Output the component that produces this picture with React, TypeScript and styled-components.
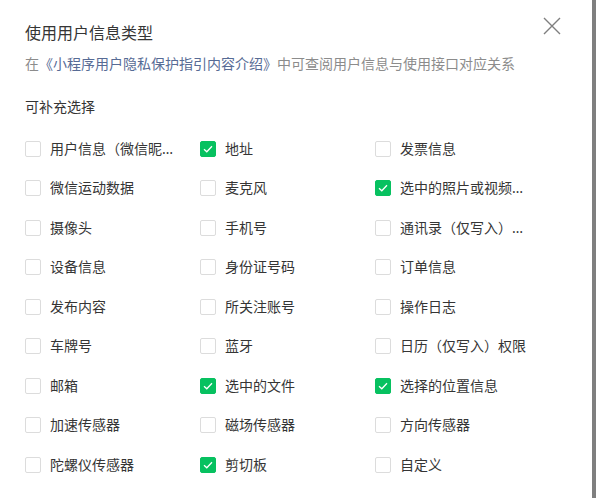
import React from 'react';
import styled, { createGlobalStyle } from 'styled-components';

const GlobalStyle = createGlobalStyle`
  html, body {
    margin: 0;
    padding: 0;
    background: #7f7f7f;
  }
  body {
    font-family: "Noto Sans CJK SC", "Noto Sans", "Liberation Sans", sans-serif;
  }
`;

const Page = styled.div`
  display: flex;
  width: 596px;
  height: 498px;
  overflow: hidden;
`;

const Dialog = styled.div`
  position: relative;
  width: 592px;
  height: 498px;
  box-sizing: border-box;
  background: #fff;
  padding: 20px 25px 0 25px;
`;

const Backdrop = styled.div`
  flex: 1;
  background: #7f7f7f;
`;

const Title = styled.h2`
  margin: 0;
  font-size: 16px;
  line-height: 24px;
  font-weight: 400;
  color: #353535;
`;

const CloseButton = styled.button`
  position: absolute;
  top: 16px;
  right: 30px;
  width: 20px;
  height: 20px;
  padding: 0;
  border: none;
  background: none;
  cursor: pointer;
  display: flex;
  align-items: center;
  justify-content: center;
`;

const Desc = styled.p`
  margin: 9px 0 0;
  font-size: 14px;
  line-height: 20px;
  color: #8c8c8c;
`;

const Link = styled.a`
  color: #576b95;
  text-decoration: none;
`;

const SectionLabel = styled.div`
  margin-top: 23px;
  font-size: 14px;
  line-height: 20px;
  color: #353535;
`;

const Grid = styled.div`
  margin-top: 13px;
  display: grid;
  grid-template-columns: repeat(3, 175px);
  grid-auto-rows: 39.5px;
`;

const Option = styled.label`
  display: flex;
  align-items: center;
  gap: 9px;
  cursor: pointer;
`;

const Box = styled.span<{ $checked: boolean }>`
  flex: none;
  width: 16px;
  height: 16px;
  box-sizing: border-box;
  border-radius: 2px;
  border: 1px solid ${(p) => (p.$checked ? '#07c160' : '#dcdcdc')};
  background: ${(p) => (p.$checked ? '#07c160' : '#fff')};
  display: flex;
  align-items: center;
  justify-content: center;
`;

// Latin font first so the ellipsis sits on the baseline like "..."
const OptionText = styled.span`
  max-width: 132px;
  font-family: "Noto Sans", "Noto Sans CJK SC", sans-serif;
  font-size: 14px;
  line-height: 20px;
  color: #353535;
  white-space: nowrap;
  overflow: hidden;
  text-overflow: ellipsis;
`;

const options: { label: string; checked?: boolean }[] = [
  { label: '用户信息（微信昵称、头像）' },
  { label: '地址', checked: true },
  { label: '发票信息' },
  { label: '微信运动数据' },
  { label: '麦克风' },
  { label: '选中的照片或视频信息', checked: true },
  { label: '摄像头' },
  { label: '手机号' },
  { label: '通讯录（仅写入）权限' },
  { label: '设备信息' },
  { label: '身份证号码' },
  { label: '订单信息' },
  { label: '发布内容' },
  { label: '所关注账号' },
  { label: '操作日志' },
  { label: '车牌号' },
  { label: '蓝牙' },
  { label: '日历（仅写入）权限' },
  { label: '邮箱' },
  { label: '选中的文件', checked: true },
  { label: '选择的位置信息', checked: true },
  { label: '加速传感器' },
  { label: '磁场传感器' },
  { label: '方向传感器' },
  { label: '陀螺仪传感器' },
  { label: '剪切板', checked: true },
  { label: '自定义' },
];

const Check = () => (
  <svg width="10" height="8" viewBox="0 0 10 8">
    <path d="M1 4.2 L3.8 6.8 L9 1.2" fill="none" stroke="#fff" strokeWidth="1.3" />
  </svg>
);

export default function App() {
  return (
    <Page>
      <GlobalStyle />
      <Dialog>
        <Title>使用用户信息类型</Title>
        <CloseButton aria-label="关闭">
          <svg width="18" height="18" viewBox="0 0 18 18">
            <path d="M1 1 L17 17 M17 1 L1 17" stroke="#7f7f7f" strokeWidth="1.4" />
          </svg>
        </CloseButton>
        <Desc>
          在<Link href="#">《小程序用户隐私保护指引内容介绍》</Link>中可查阅用户信息与使用接口对应关系
        </Desc>
        <SectionLabel>可补充选择</SectionLabel>
        <Grid>
          {options.map((o) => (
            <Option key={o.label}>
              <Box $checked={!!o.checked}>{o.checked && <Check />}</Box>
              <OptionText>{o.label}</OptionText>
            </Option>
          ))}
        </Grid>
      </Dialog>
      <Backdrop />
    </Page>
  );
}
